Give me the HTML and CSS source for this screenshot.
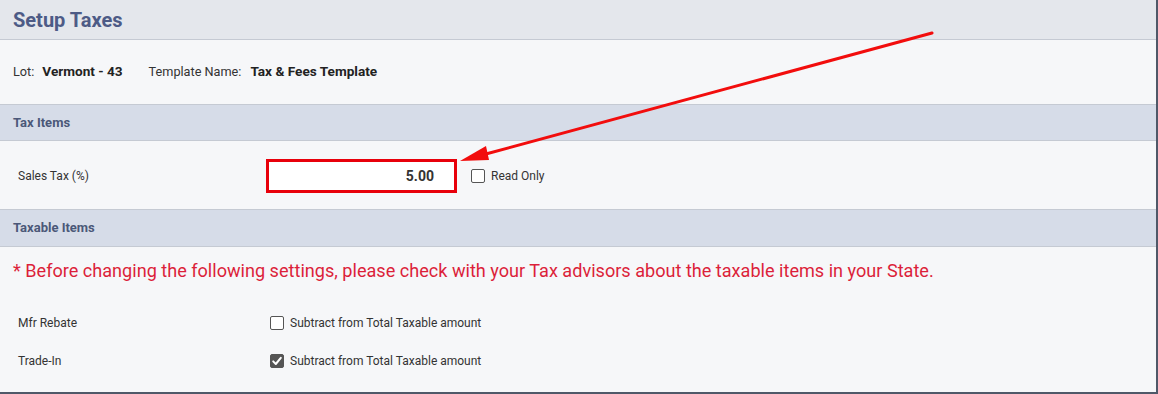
FILE: index.html
```html
<!DOCTYPE html>
<html lang="en">
<head>
<meta charset="utf-8">
<title>Setup Taxes</title>
<link rel="stylesheet" href="styles.css">
</head>
<body>
<div class="frame">
  <header class="page-head"><h1 class="page-title">Setup Taxes</h1></header>
  <section class="info">
    <span class="info-label">Lot:</span><span class="info-value">Vermont - 43</span>
    <span class="info-label info-gap">Template Name:</span><span class="info-value">Tax &amp; Fees Template</span>
  </section>
  <div class="sec-head">Tax Items</div>
  <div class="tax-row">
    <span class="row-label">Sales Tax (%)</span>
    <div class="amount-box">5.00</div>
    <span class="check"></span><span class="check-text">Read Only</span>
  </div>
  <div class="sec-head sec-head-2">Taxable Items</div>
  <section class="taxable">
    <p class="warning">* Before changing the following settings, please check with your Tax advisors about the taxable items in your State.</p>
    <div class="opt-row">
      <span class="row-label">Mfr Rebate</span>
      <span class="check check-opt"></span><span class="check-text">Subtract from Total Taxable amount</span>
    </div>
    <div class="opt-row">
      <span class="row-label">Trade-In</span>
      <span class="check check-opt checked"><svg viewBox="0 0 14 14" width="14" height="14"><path d="M3.2 7.4 L5.8 10 L10.8 3.8" fill="none" stroke="#fff" stroke-width="2" stroke-linecap="round" stroke-linejoin="round"/></svg></span><span class="check-text">Subtract from Total Taxable amount</span>
    </div>
  </section>
  <svg class="arrow" width="1158" height="394" viewBox="0 0 1158 394">
    <line x1="932" y1="33" x2="484" y2="154.5" stroke="#f20d0d" stroke-width="3" stroke-linecap="round"/>
    <polygon points="460,161 486,146 489,160" fill="#f20d0d"/>
  </svg>
</div>
</body>
</html>
```
FILE: styles.css
```css
* { box-sizing: border-box; }
html, body { margin: 0; padding: 0; }
body {
  font-family: Roboto, "Liberation Sans", Arial, sans-serif;
  color: #222;
  background: #f6f7f9;
}
.frame {
  position: relative;
  width: 1158px;
  height: 394px;
  border-right: 2px solid #4f5868;
  border-bottom: 2px solid #4f5868;
  background: #f6f7f9;
  overflow: hidden;
}
.page-head {
  height: 40px;
  background: #e4e7ec;
  border-bottom: 1px solid #c5cad3;
  display: flex;
  align-items: center;
  padding-left: 13px;
}
.page-title {
  margin: 0;
  font-size: 20px;
  font-weight: 700;
  color: #4d5b86;
  line-height: 1;
  padding-top: 1px;
}
.info {
  height: 65px;
  border-bottom: 1px solid #c5cad3;
  display: flex;
  align-items: center;
  padding-left: 13px;
  padding-bottom: 2px;
}
.info-label { color: #333; margin-right: 8px; font-size: 12.7px; }
.info-gap { margin-left: 26px; margin-right: 9px; }
.info-value { font-weight: 700; font-size: 13.6px; color: #222; }
.sec-head {
  height: 36px;
  background: #d6dce8;
  border-bottom: 1px solid #c5cad3;
  display: flex;
  align-items: center;
  padding-left: 13px;
  font-size: 13px;
  font-weight: 700;
  color: #4b5878;
}
.sec-head-2 { height: 37px; padding-bottom: 2px; }
.tax-row {
  height: 69px;
  border-bottom: 1px solid #c5cad3;
  display: flex;
  align-items: center;
  padding-left: 18px;
  padding-top: 2px;
}
.row-label {
  width: 248px;
  font-size: 12px;
  color: #333;
}
.amount-box {
  width: 191px;
  height: 34px;
  border: 3px solid #e8000b;
  background: #fff;
  display: flex;
  align-items: center;
  justify-content: flex-end;
  padding-right: 20px;
  font-size: 14px;
  font-weight: 700;
  color: #333;
  margin-right: 14px;
}
.check {
  width: 14px;
  height: 14px;
  border: 1.5px solid #555;
  border-radius: 2px;
  background: #fff;
  margin-right: 6px;
  display: inline-flex;
}
.check-opt { margin-left: 4px; }
.checked {
  background: #555;
  border-color: #555;
}
.checked svg { margin: -1.5px; }
.check-text { font-size: 12px; color: #333; }
.taxable {
  padding-left: 13px;
}
.warning {
  margin: 14px 0 0 0;
  font-size: 18.1px;
  color: #dc1f3a;
  line-height: 20px;
  height: 20px;
  white-space: nowrap;
}
.opt-row {
  display: flex;
  align-items: center;
  padding-left: 5px;
  height: 38px;
}
.warning + .opt-row { margin-top: 23px; }
.arrow {
  position: absolute;
  left: 0;
  top: 0;
  pointer-events: none;
}
```
